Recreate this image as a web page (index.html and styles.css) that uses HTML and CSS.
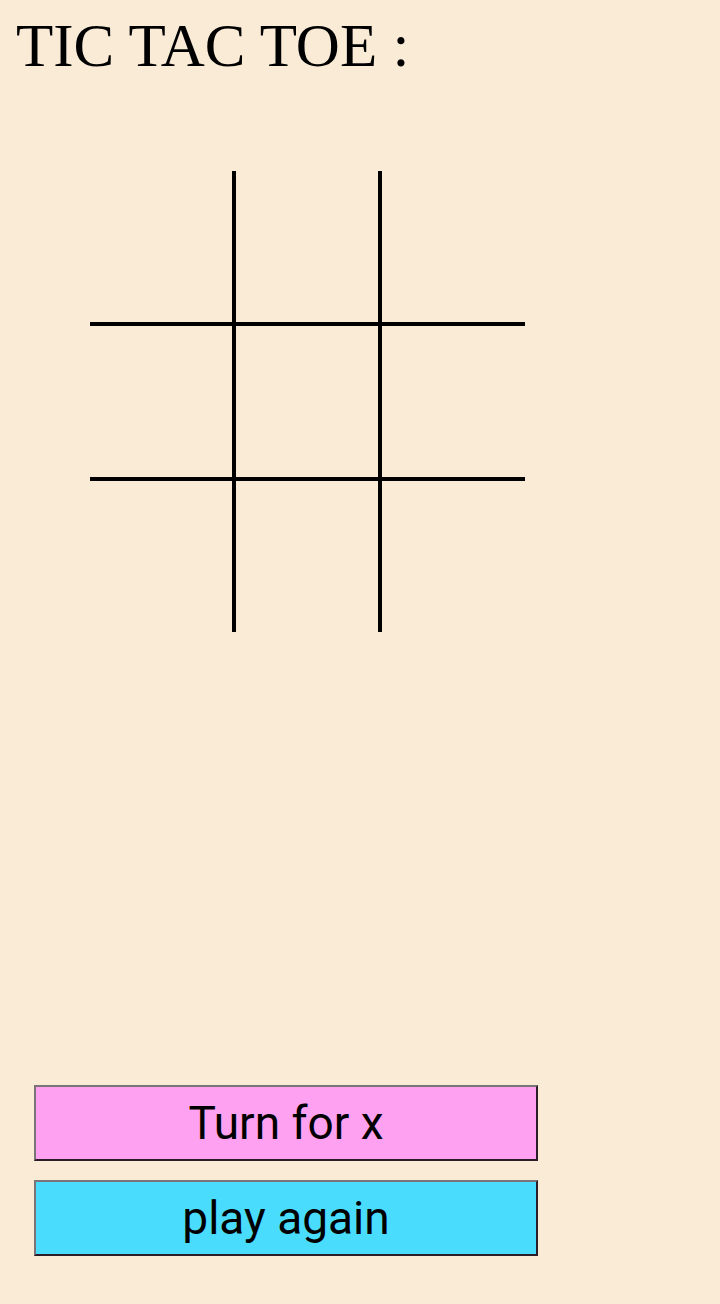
FILE: index.html
```html
<!DOCTYPE html>
<html>
<head>
<meta charset="utf-8">
<link rel="stylesheet" href="styles.css">
</head>
<body>
<h1 class="title">TIC TAC TOE :</h1>
<div class="board">
  <div class="cell"></div><div class="cell"></div><div class="cell"></div>
  <div class="cell"></div><div class="cell"></div><div class="cell"></div>
  <div class="cell"></div><div class="cell"></div><div class="cell"></div>
</div>
<div class="controls">
  <button class="btn btn-turn">Turn for x</button>
  <button class="btn btn-again">play again</button>
</div>
</body>
</html>
```

FILE: styles.css
```css
html, body {
  margin: 0;
  padding: 0;
  background: #faebd7;
}
body {
  width: 720px;
  height: 1304px;
  overflow: hidden;
}
.title {
  margin: 0;
  padding: 8px 0 0 16px;
  font-family: "Liberation Serif", serif;
  font-weight: normal;
  font-size: 61px;
  line-height: 76px;
  color: #000;
}
.board {
  display: grid;
  grid-template-columns: 142px 142px 143px;
  grid-template-rows: 151px 151px 151px;
  gap: 4px;
  background: #000;
  width: 435px;
  margin: 87px 0 0 90px;
}
.cell {
  background: #faebd7;
}
.controls {
  display: flex;
  flex-direction: column;
  gap: 19px;
  margin: 453px 0 0 34px;
}
.btn {
  width: 504px;
  height: 76px;
  box-sizing: border-box;
  border: 2px solid;
  border-color: #7a7478 #2a1c28 #2a1c28 #7a7478;
  font-family: Roboto, sans-serif;
  font-size: 46px;
  color: #000;
  padding: 0;
  margin: 0;
}
.btn-turn {
  background: #ffa1f1;
}
.btn-again {
  background: #4adcfd;
}
```
